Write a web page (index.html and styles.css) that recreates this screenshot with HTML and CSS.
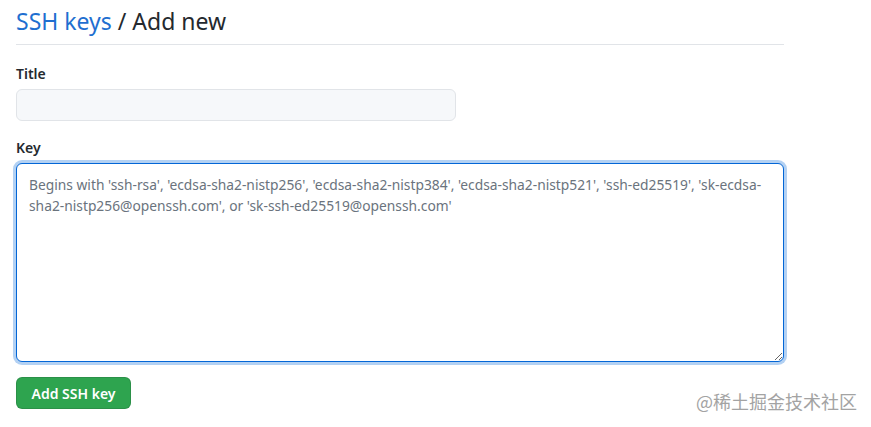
FILE: index.html
```html
<!DOCTYPE html>
<html lang="en">
<head>
<meta charset="utf-8">
<title>SSH keys / Add new</title>
<link rel="stylesheet" href="styles.css">
</head>
<body>
<div class="page">
  <div class="subhead">
    <h2 class="subhead-heading"><a class="crumb" href="#">SSH keys</a> / Add new</h2>
  </div>
  <form class="form">
    <div class="form-group">
      <label class="label" for="title">Title</label>
      <input class="input" id="title" type="text">
    </div>
    <div class="form-group">
      <label class="label" for="key">Key</label>
      <textarea class="textarea" id="key" placeholder="Begins with 'ssh-rsa', 'ecdsa-sha2-nistp256', 'ecdsa-sha2-nistp384', 'ecdsa-sha2-nistp521', 'ssh-ed25519', 'sk-ecdsa-sha2-nistp256@openssh.com', or 'sk-ssh-ed25519@openssh.com'"></textarea>
    </div>
    <button class="btn" type="button">Add SSH key</button>
  </form>
</div>
<div class="watermark">@稀土掘金技术社区</div>
</body>
</html>
```

FILE: styles.css
```css
html, body {
  margin: 0;
  padding: 0;
  background: #fff;
}
body {
  font-family: "Noto Sans", "Open Sans", "Noto Sans CJK SC", sans-serif;
  color: #24292e;
  font-size: 14px;
  width: 871px;
  height: 427px;
  overflow: hidden;
  position: relative;
}
.page {
  width: 768px;
  padding: 0 16px;
}
.subhead {
  border-bottom: 1px solid #e1e4e8;
  padding: 3px 0 5px;
}
.subhead-heading {
  margin: 0;
  font-size: 23px;
  font-weight: 400;
  line-height: 36px;
}
.crumb {
  color: #1f6fd0;
  text-decoration: none;
}
.form {
  display: flex;
  flex-direction: column;
  padding-top: 19px;
}
.form-group {
  display: flex;
  flex-direction: column;
  margin-bottom: 17px;
}
.label {
  font-weight: 600;
  font-size: 14px;
  line-height: 20px;
  margin-bottom: 5px;
}
.input {
  box-sizing: border-box;
  width: 440px;
  height: 32px;
  background: #f6f8fa;
  border: 1px solid #e1e4e8;
  border-radius: 6px;
  font: inherit;
  padding: 5px 12px;
  outline: none;
}
.textarea {
  box-sizing: border-box;
  width: 768px;
  height: 199px;
  border: 1px solid #0366d6;
  border-radius: 6px;
  box-shadow: 0 0 0 3px rgba(3, 102, 214, 0.3);
  padding: 10px 12px;
  font: inherit;
  font-size: 13.8px;
  line-height: 21px;
  resize: vertical;
  outline: none;
  margin: 0;
}
.textarea::placeholder {
  color: #6a737d;
}
.btn {
  align-self: flex-start;
  margin-top: -2px;
  box-sizing: border-box;
  width: 115px;
  height: 32px;
  background: #2ea44f;
  color: #fff;
  border: 1px solid rgba(27, 31, 35, 0.15);
  border-radius: 6px;
  font: inherit;
  font-weight: 600;
  font-size: 14px;
  padding: 0 12px;
}
.watermark {
  position: absolute;
  right: 14px;
  top: 389px;
  font-size: 18px;
  line-height: 24px;
  color: #a3a3a3;
  font-family: "Noto Sans CJK SC", sans-serif;
}
```
